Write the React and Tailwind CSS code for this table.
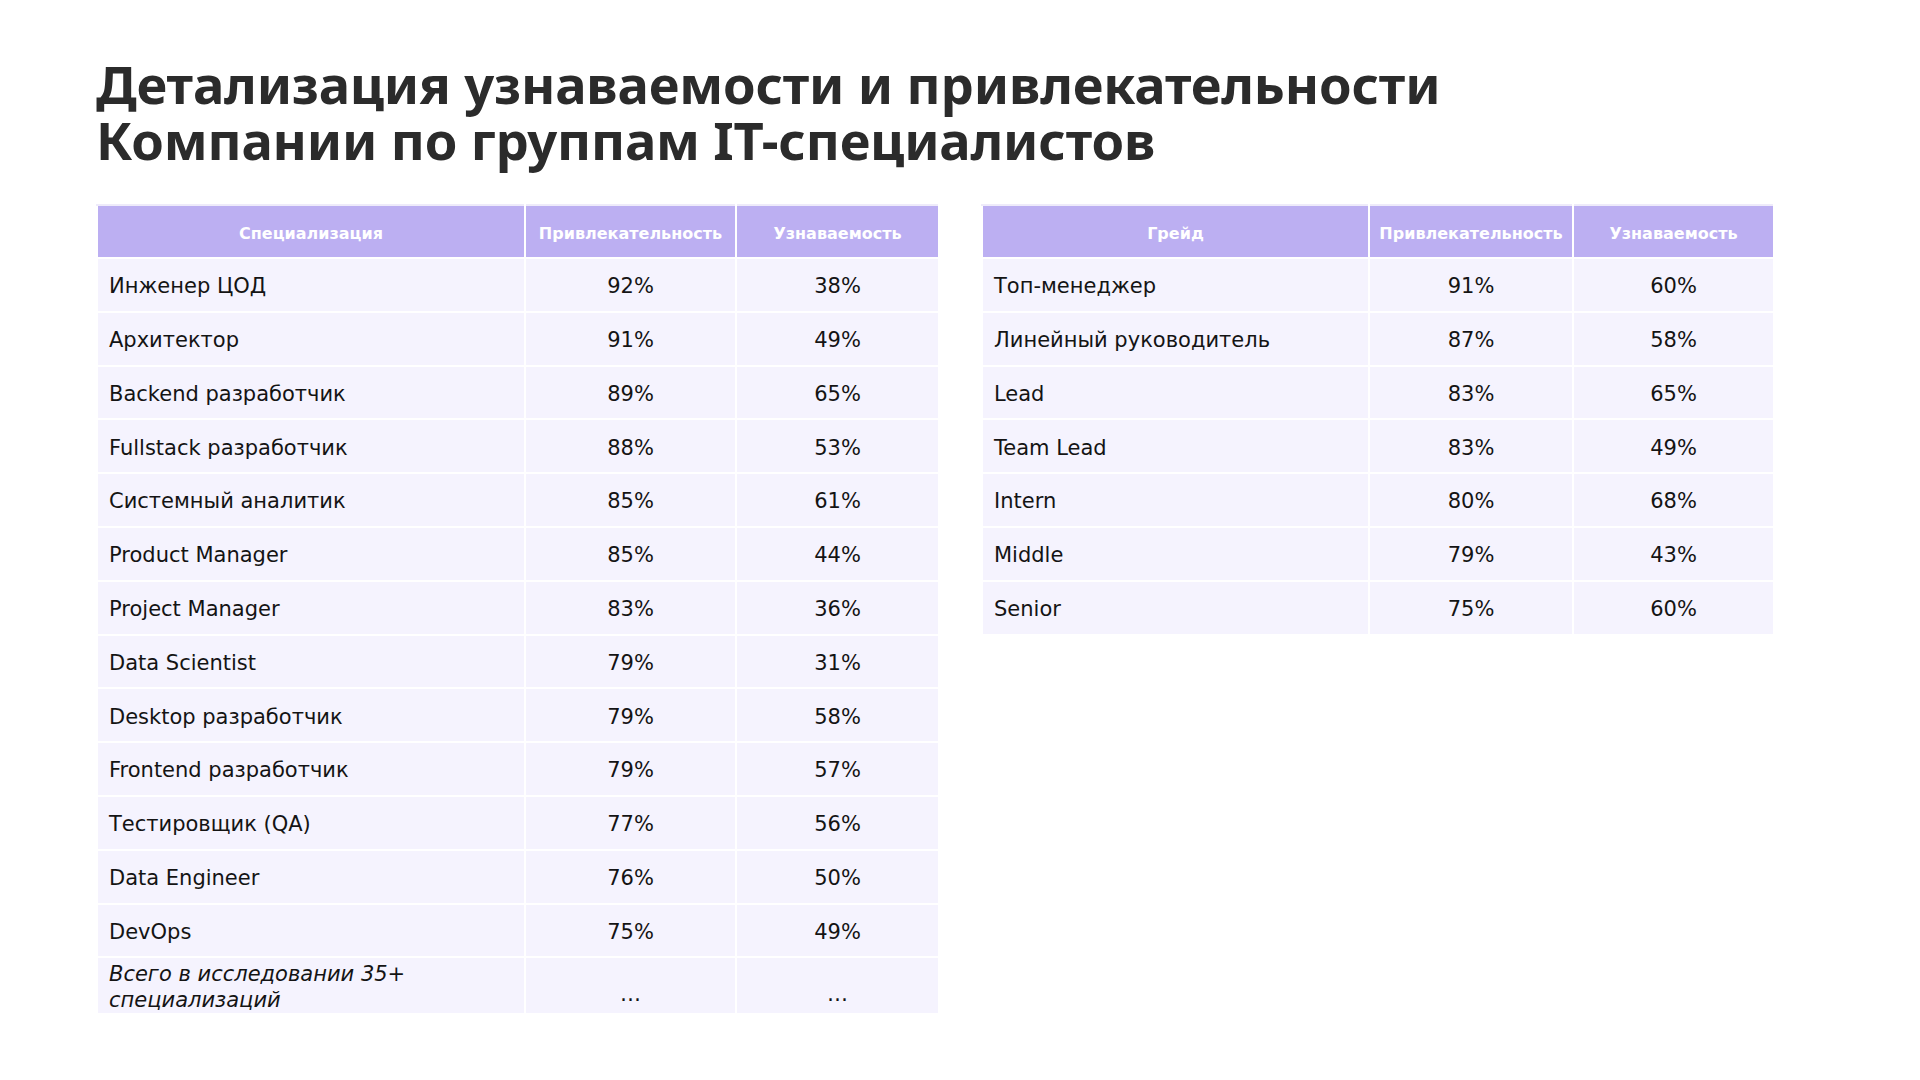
import React from "react";

const left = [
  ["Инженер ЦОД", "92%", "38%"],
  ["Архитектор", "91%", "49%"],
  ["Backend разработчик", "89%", "65%"],
  ["Fullstack разработчик", "88%", "53%"],
  ["Системный аналитик", "85%", "61%"],
  ["Product Manager", "85%", "44%"],
  ["Project Manager", "83%", "36%"],
  ["Data Scientist", "79%", "31%"],
  ["Desktop разработчик", "79%", "58%"],
  ["Frontend разработчик", "79%", "57%"],
  ["Тестировщик (QA)", "77%", "56%"],
  ["Data Engineer", "76%", "50%"],
  ["DevOps", "75%", "49%"],
];

const right = [
  ["Топ-менеджер", "91%", "60%"],
  ["Линейный руководитель", "87%", "58%"],
  ["Lead", "83%", "65%"],
  ["Team Lead", "83%", "49%"],
  ["Intern", "80%", "68%"],
  ["Middle", "79%", "43%"],
  ["Senior", "75%", "60%"],
];

const bodyFont = { fontFamily: '"DejaVu Sans", sans-serif' };

function Table({ widths, head, rows, last }) {
  return (
    <table className="border-collapse table-fixed" style={{ width: widths.reduce((a, b) => a + b, 0) }}>
      <colgroup>
        {widths.map((w, i) => (
          <col key={i} style={{ width: w }} />
        ))}
      </colgroup>
      <thead>
        <tr className="h-[53px] bg-[#bcaff2]">
          {head.map((h, i) => (
            <th
              key={i}
              className="border-2 border-white border-t-[#eeebfa] text-white font-bold text-[16px] text-center px-0 pt-[4px] pb-0"
            >
              {h}
            </th>
          ))}
        </tr>
      </thead>
      <tbody className="text-[21px] text-[#141414]">
        {rows.map((r, i) => (
          <tr key={i} className="h-[53.8px] bg-[#f5f3fe]">
            <td className="border-2 border-white pl-[11px] pr-2 pt-[4px] pb-0 whitespace-nowrap">{r[0]}</td>
            <td className="border-2 border-white text-center pt-[4px] pb-0 px-0">{r[1]}</td>
            <td className="border-2 border-white text-center pt-[4px] pb-0 px-0">{r[2]}</td>
          </tr>
        ))}
        {last && (
          <tr className="h-[53.8px] bg-[#f5f3fe]">
            <td className="border-2 border-white pl-[11px] pr-2 pt-[3px] pb-0 italic leading-[26px]">
              Всего в исследовании 35+
              <br />
              специализаций
            </td>
            <td className="border-2 border-white text-center p-0 align-bottom pb-[9px] leading-[20px]">…</td>
            <td className="border-2 border-white text-center p-0 align-bottom pb-[9px] leading-[20px]">…</td>
          </tr>
        )}
      </tbody>
    </table>
  );
}

export default function App() {
  return (
    <div className="w-[1920px] h-[1080px] bg-white overflow-hidden pl-[96px] pt-[56px]" style={bodyFont}>
      <h1
        className="text-[52.5px] leading-[56px] font-bold text-[#2b2b2b] tracking-[-0.15px]"
        style={{ fontFamily: '"Noto Sans", sans-serif' }}
      >
        Детализация узнаваемости и привлекательности
        <br />
        Компании по группам IT-специалистов
      </h1>
      <div className="flex items-start gap-[41px] mt-[36px]">
        <Table
          widths={[428, 211, 203]}
          head={["Специализация", "Привлекательность", "Узнаваемость"]}
          rows={left}
          last
        />
        <Table
          widths={[387, 204, 201]}
          head={["Грейд", "Привлекательность", "Узнаваемость"]}
          rows={right}
        />
      </div>
    </div>
  );
}
